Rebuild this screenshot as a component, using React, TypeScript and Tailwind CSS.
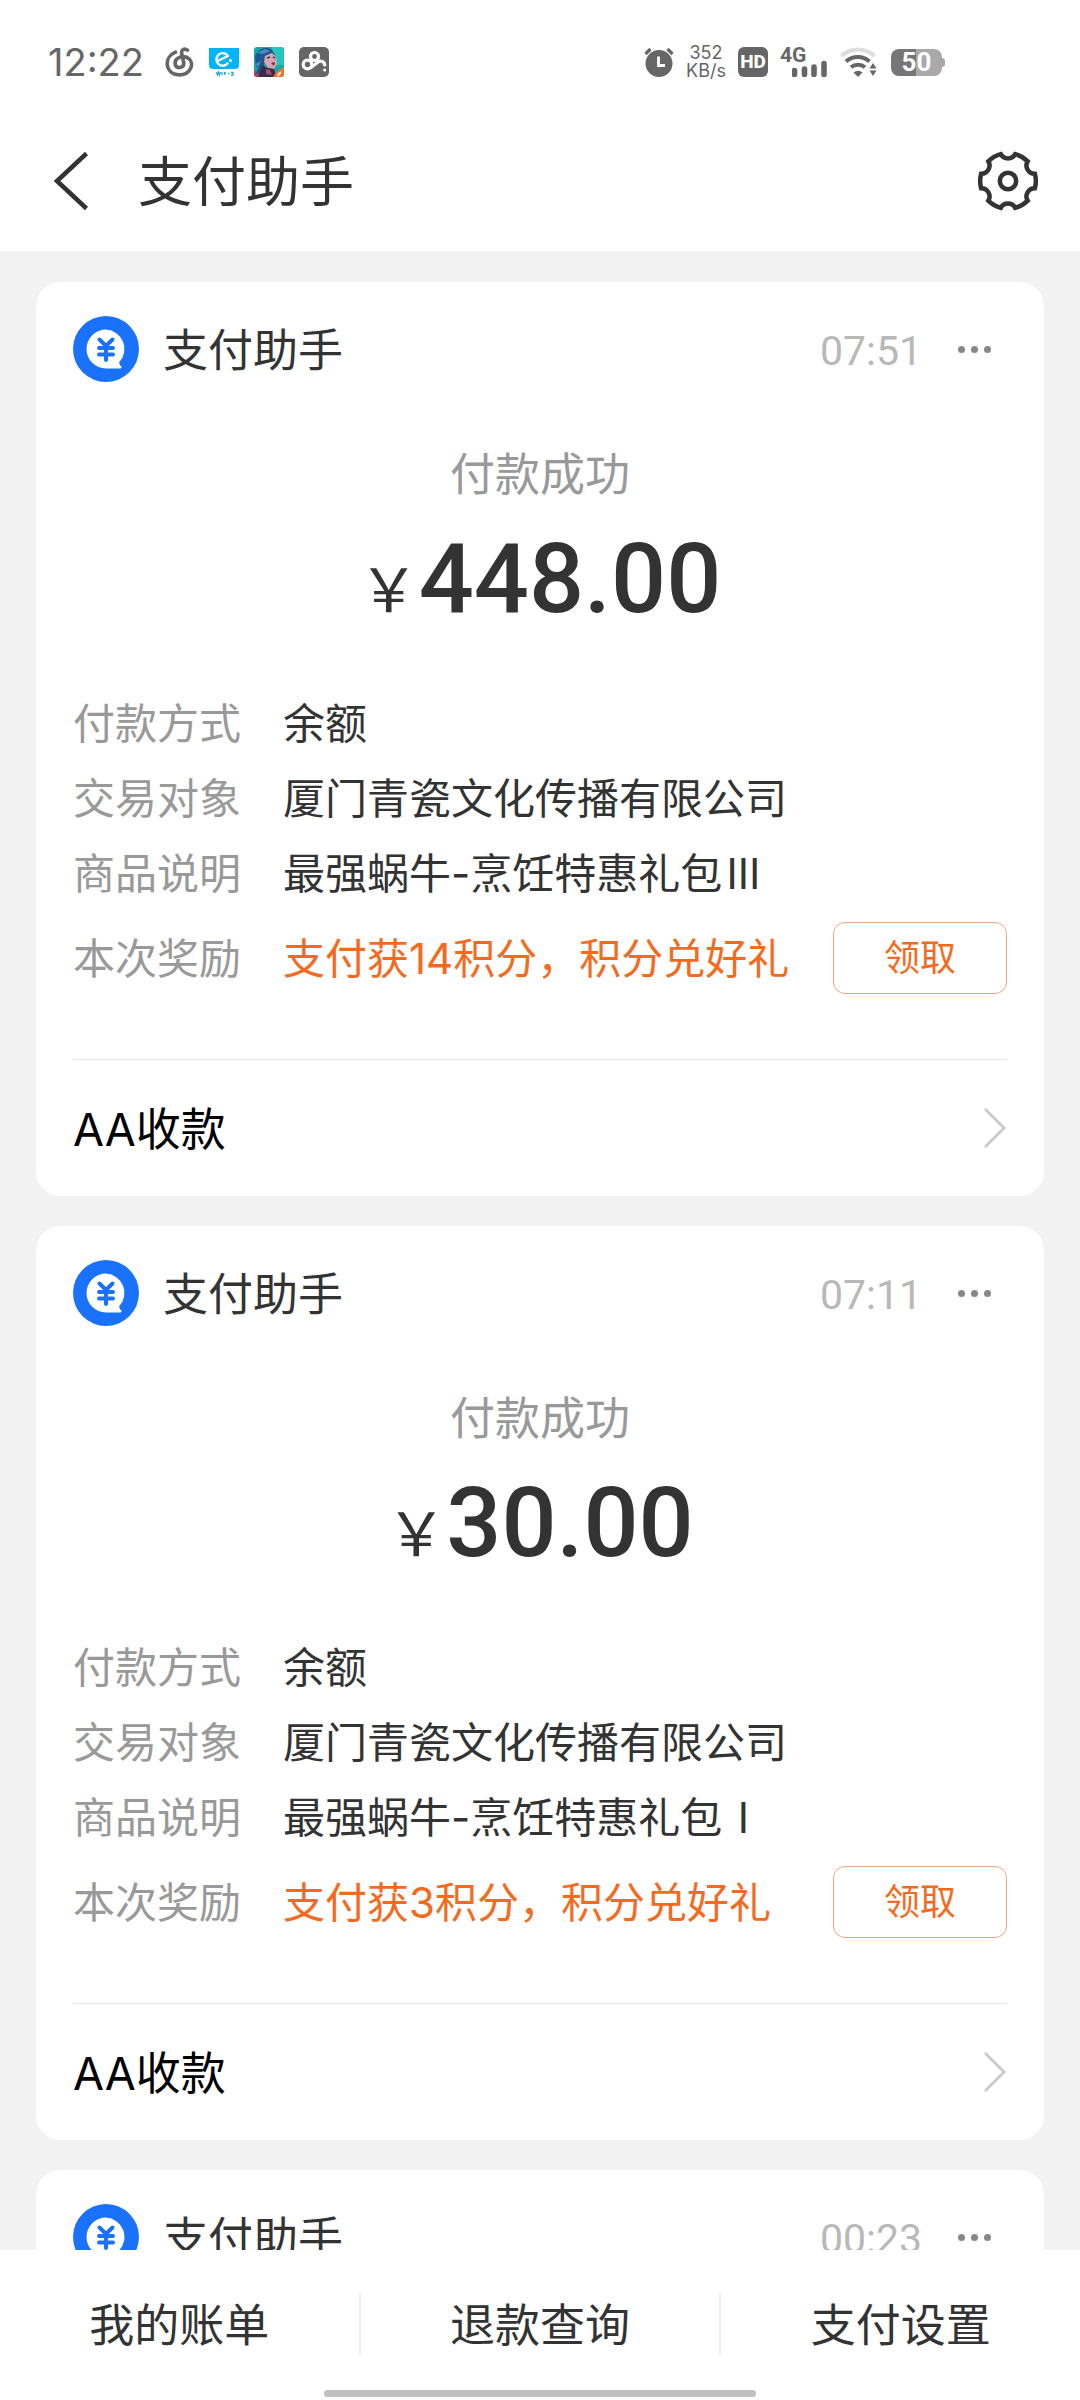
import type { ReactNode } from 'react';

interface Payment {
  id: string;
  time: string;
  amount: string;
  goods: string;
  tier: string;
  reward: string;
}

const PAYEE = '厦门青瓷文化传播有限公司';

const PAYMENTS: Payment[] = [
  {
    id: 'p1',
    time: '07:51',
    amount: '448.00',
    goods: '最强蜗牛-烹饪特惠礼包',
    tier: 'Ⅲ',
    reward: '支付获14积分，积分兑好礼',
  },
  {
    id: 'p2',
    time: '07:11',
    amount: '30.00',
    goods: '最强蜗牛-烹饪特惠礼包',
    tier: 'Ⅰ',
    reward: '支付获3积分，积分兑好礼',
  },
];

const FOOTER_ACTIONS = ['我的账单', '退款查询', '支付设置'];

function StatusBar() {
  return (
    <div className="flex h-[124px] items-center justify-between pr-[135px] pl-[48px] text-[#666666]">
      <div className="flex items-center">
        <span className="w-[117px] text-[38px] leading-[40px]">12:22</span>
        <svg viewBox="0 0 30 30" className="mr-[14px] size-[30px]" fill="none" stroke="currentColor" strokeWidth="3.600" strokeLinecap="round" aria-hidden>
          <path d="M10.500 5.200C-1.500 10-.5 26.500 13.500 27.800C26.500 28.500 30.500 14.500 22 10.500C15.500 8 9 12 10.300 17.500C11.500 22 19 21.500 18.800 16L16.800 7C15.800 2.500 19.500 .8 22.500 3.200" />
        </svg>
        <svg viewBox="0 0 30 30" className="mr-[15px] size-[30px]" aria-hidden>
          <path d="M0 1h30v17q0 4-4 4H4q-4 0-4-4z" fill="#00b4fc" />
          <path d="M9.500 13.500l9.500-4.500a6.300 6.300 0 1 0-.5 7.500" fill="none" stroke="#fff" strokeWidth="2.400" strokeLinecap="round" strokeLinejoin="round" />
          <circle cx="21.500" cy="13.500" r="1.500" fill="#fff" />
          <path d="M7.500 25l1 3 1-3 1 3 1-3M13 25v3M15.500 25v3M15.500 26h1.500M19 26.500h1.500M22 25.500h2M22 28h2V25" fill="none" stroke="#2fa8d0" strokeWidth="1.300" />
        </svg>
        <svg viewBox="0 0 30 30" className="mr-[15px] size-[30px]" aria-hidden>
          <clipPath id="game-clip"><rect width="30" height="30" rx="3" /></clipPath>
          <g clipPath="url(#game-clip)">
            <path d="M0 0h30v30H0z" fill="#12a9ad" />
            <path d="M18 0h12v18H20z" fill="#25c5bd" />
            <path d="M1 9C5 1 12-1 18 3l3 5-8 1-3 9-5 9-4 1 4-9-3 2z" fill="#21578e" />
            <path d="M3 6l8-4 5 2-7 3zM1 17l6-3-3 6z" fill="#4a8dc3" />
            <path d="M11 9l7-3 4 4 1 7-3 5-6-1-4-6z" fill="#d6a5ae" />
            <path d="M13 11l3-1M19 10l2 1" stroke="#3c3557" strokeWidth="1.500" />
            <path d="M17 16l4-1-1 4z" fill="#7b2142" />
            <path d="M8 18l6 3 6 1 3 8H4z" fill="#3b2b49" />
            <path d="M12 22l4 1 2 5-6-1z" fill="#a5506b" />
            <path d="M19 30l3-5 8-5v10z" fill="#f5702c" />
            <path d="M23 30l1-4 4-2-2 4z" fill="#fff0e4" />
            <path d="M0 22l5 8H0z" fill="#ce3348" />
          </g>
        </svg>
        <svg viewBox="0 0 30 30" className="size-[30px]" aria-hidden>
          <rect width="30" height="30" rx="5" fill="#666666" />
          <g fill="none" stroke="#fff" strokeWidth="3.200" strokeLinecap="round">
            <circle cx="15.500" cy="9.500" r="4" />
            <circle cx="8.500" cy="17.500" r="4.300" />
            <path d="M12 20.500l7-5.500a4.300 4.300 0 0 1 6.800 3" />
          </g>
          <circle cx="25.700" cy="23" r="1.500" fill="#fff" />
        </svg>
      </div>

      <div className="flex items-center">
        <svg viewBox="0 0 30 30" className="mr-[14px] size-[30px]" aria-hidden>
          <circle cx="15" cy="16.500" r="13.500" fill="currentColor" />
          <path d="M1.500 7l5-5M28.500 7l-5-5" stroke="currentColor" strokeWidth="3.200" />
          <path d="M14.500 9.500v9h6.500" fill="none" stroke="#fff" strokeWidth="2.800" />
        </svg>
        <div className="mr-[14px] flex w-[36px] flex-col items-center text-[18px] leading-[18px]">
          <span>352</span>
          <span>KB/s</span>
        </div>
        <span className="mr-[12px] flex size-[30px] items-center justify-center rounded-md bg-[#666666] font-['Roboto',sans-serif] text-[19px] font-extrabold text-white">
          HD
        </span>
        <div className="mr-[12px] flex h-[30px] w-[48px] items-start">
          <span className="w-[12px] font-['Roboto',sans-serif] text-[21px] leading-[16px] font-bold">4G</span>
          <svg viewBox="0 0 36 30" className="h-[30px] w-[36px] shrink-0" aria-hidden>
            <path d="M2.500 23.500v4M12.500 22v5.500M22 20v7.500M32 16.500v11" stroke="currentColor" strokeWidth="5.600" strokeLinecap="round" />
          </svg>
        </div>
        <svg viewBox="0 0 38 30" className="mr-[13px] h-[30px] w-[38px]" aria-hidden>
          <g fill="none" strokeWidth="4">
            <path d="M1.500 9a24 24 0 0 1 33 0" stroke="#dddddd" />
            <path d="M6 14.500a17.500 17.500 0 0 1 23.500 0" stroke="currentColor" />
            <path d="M11 20.300a11 11 0 0 1 14 0" stroke="currentColor" />
          </g>
          <path d="M13.500 25.500q4.500-3.500 9 0l-4.500 4.500z" fill="currentColor" />
          <path d="M29.500 21.500l3.500-5.500 3.500 5.500zM29.500 23.500l3.500 5.500 3.500-5.500z" fill="currentColor" />
        </svg>
        <div className="flex items-center">
          <span className="flex h-[27px] w-[51px] items-center justify-center rounded-lg bg-linear-to-r from-[#767676] from-50% to-[#a9a9a9] to-50% font-['Roboto',sans-serif] text-[26px] font-bold text-white">
            50
          </span>
          <span className="h-[9px] w-[3px] rounded-r-sm bg-[#a9a9a9]" />
        </div>
      </div>
    </div>
  );
}

function TopBar() {
  return (
    <header className="shrink-0 bg-white pb-[13px]">
      <StatusBar />
      <div className="flex h-[114px] items-center pr-[40px] pl-[52px]">
        <button type="button" aria-label="返回" className="mr-[46px]">
          <svg viewBox="0 0 40 60" className="h-[60px] w-[40px]" fill="none" stroke="#333333" strokeWidth="4.500" aria-hidden>
            <path d="M34.500 2.500L5 30l29.500 27.500" />
          </svg>
        </button>
        <h1 className="flex-1 pt-[4px] text-[54px] leading-[64px]">支付助手</h1>
        <button type="button" aria-label="设置">
          <svg viewBox="-32 -32 64 64" className="size-[64px]" fill="none" stroke="#333333" strokeWidth="4.500" aria-hidden>
            <path d="M26.900-7.200A27.800 27.800 0 0 1 26.900 7.200A8.200 8.200 0 0 0 19.700 19.700A27.800 27.800 0 0 1 7.200 26.900A8.200 8.200 0 0 0-7.200 26.900A27.800 27.800 0 0 1-19.700 19.700A8.200 8.200 0 0 0-26.900 7.200A27.800 27.800 0 0 1-26.900-7.200A8.200 8.200 0 0 0-19.700-19.700A27.800 27.800 0 0 1-7.200-26.900A8.200 8.200 0 0 0 7.200-26.900A27.800 27.800 0 0 1 19.700-19.700A8.200 8.200 0 0 0 26.900-7.200Z" />
            <circle r="8.200" />
          </svg>
        </button>
      </div>
    </header>
  );
}

function AssistantIcon() {
  return (
    <svg viewBox="0 0 66 66" className="size-[66px]" aria-hidden>
      <circle cx="33" cy="33" r="33" fill="#1a72fb" />
      <path d="M33 13.500a19.500 19.500 0 1 0 0 39h14.500q2.500-1.500 0-2.500l-1.500-3.500A19.500 19.500 0 0 0 33 13.500z" fill="#fff" />
      <path d="M26.500 23.500l6.500 6.500 6.500-6.500M26 32h14M26 38.500h14M33 31v13" fill="none" stroke="#1a72fb" strokeWidth="4" strokeLinecap="round" />
    </svg>
  );
}

function Card({ time, children }: { time: string; children?: ReactNode }) {
  return (
    <article className="shrink-0 rounded-3xl bg-white px-[37px] pt-[34px]">
      <div className="flex h-[66px] items-center">
        <AssistantIcon />
        <h2 className="ml-6 flex-1 pt-[4px] text-[45px] leading-[62px]">支付助手</h2>
        <time className="pt-[4px] font-['Roboto',sans-serif] text-[41px] leading-[62px] text-[#b8b8b8]">{time}</time>
        <button type="button" aria-label="更多" className="mr-[16px] ml-[36px] flex h-[64px] items-center gap-[6px]">
          <span className="size-[7px] rounded-full bg-[#888888]" />
          <span className="size-[7px] rounded-full bg-[#888888]" />
          <span className="size-[7px] rounded-full bg-[#888888]" />
        </button>
      </div>
      {children}
    </article>
  );
}

function DetailRow({ label, children }: { label: string; children: ReactNode }) {
  return (
    <div className="flex h-[75px] items-center">
      <dt className="w-[210px] text-[#999999]">{label}</dt>
      <dd>{children}</dd>
    </div>
  );
}

function PaymentCard({ payment }: { payment: Payment }) {
  return (
    <Card time={payment.time}>
      <p className="mt-[61px] text-center text-[45px] leading-[64px] text-[#999999]">付款成功</p>
      <p className="mt-[24px] flex h-[96px] items-baseline justify-center leading-[96px]">
        <span className="font-['Noto_Sans_CJK_SC',sans-serif] text-[60px] leading-[60px]">￥</span>
        <span className="font-['Roboto',sans-serif] text-[97px] font-medium">{payment.amount}</span>
      </p>

      <dl className="mt-[59px] text-[42px]">
        <DetailRow label="付款方式">余额</DetailRow>
        <DetailRow label="交易对象">{PAYEE}</DetailRow>
        <DetailRow label="商品说明">
          {payment.goods}
          <span className="inline-block w-[42px] text-center">{payment.tier}</span>
        </DetailRow>
        <div className="flex h-[94px] items-center">
          <dt className="w-[210px] text-[#999999]">本次奖励</dt>
          <dd className="flex flex-1 items-center justify-between text-[#f56a1d]">
            <span>{payment.reward}</span>
            <button type="button" className="h-[72px] w-[174px] rounded-xl border border-[#e6a583] text-[36px]">
              领取
            </button>
          </dd>
        </div>
      </dl>

      <button type="button" className="mt-[54px] flex h-[137px] w-full items-center justify-between border-t border-[#e8e8e8] text-[45px] text-black">
        <span className="pt-[4px]">AA收款</span>
        <svg viewBox="0 0 24 42" className="h-[42px] w-[24px]" fill="none" stroke="#cccccc" strokeWidth="3" aria-hidden>
          <path d="M2 2l19 19L2 40" />
        </svg>
      </button>
    </Card>
  );
}

function BottomBar() {
  return (
    <footer className="flex h-[150px] shrink-0 flex-col bg-white">
      <nav className="flex flex-1 items-center divide-x-2 divide-[#eeeeee] pt-[8px]">
        {FOOTER_ACTIONS.map((label) => (
          <button key={label} type="button" className="h-[62px] flex-1 pt-[4px] text-[45px] leading-[58px]">
            {label}
          </button>
        ))}
      </nav>
      <div className="mx-auto mb-[3px] h-[7px] w-2/5 rounded-full bg-[#c0c0c0]" />
    </footer>
  );
}

export default function App() {
  return (
    <div className="flex h-screen flex-col bg-[#f2f2f2] font-['Inter','Noto_Sans_CJK_SC',sans-serif] text-[#333333]">
      <TopBar />
      <main className="flex min-h-0 flex-1 flex-col gap-[30px] overflow-hidden px-[36px] pt-[31px]">
        {PAYMENTS.map((payment) => (
          <PaymentCard key={payment.id} payment={payment} />
        ))}
        <Card time="00:23" />
      </main>
      <BottomBar />
    </div>
  );
}
